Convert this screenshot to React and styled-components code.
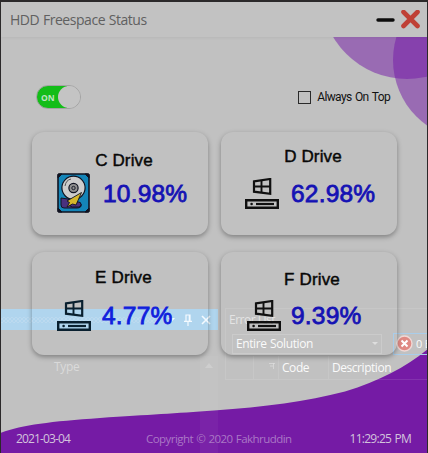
import React from "react";
import styled, { createGlobalStyle } from "styled-components";

const GlobalStyle = createGlobalStyle`
  * { box-sizing: border-box; }
  body { margin: 0; background: #2b292a; overflow: hidden; }
`;

const ui = `"Open Sans", "Noto Sans", sans-serif`;

const Window = styled.main`
  position: relative;
  display: flex;
  flex-direction: column;
  width: 428px;
  height: 453px;
  border: solid #2b292a;
  border-width: 2px 1px 0 1px;
  background: #c1c1c1;
  overflow: hidden;
  font-family: ${ui};
`;

const TitleBar = styled.header`
  position: relative;
  display: flex;
  align-items: center;
  height: 35px;
  padding: 0 7px 0 9px;
  background: #c2c2c2;
  box-shadow: 0 1px 3px rgba(0, 0, 0, 0.06);
`;

const Title = styled.h1`
  flex: 1;
  margin: 0;
  padding-top: 1px;
  font-size: 14px;
  font-weight: 400;
  line-height: 20px;
  letter-spacing: -0.46px;
  word-spacing: 0.5px;
  color: #606060;
`;

const WindowButton = styled.button`
  display: flex;
  padding: 0;
  border: 0;
  background: none;
  margin-left: ${(p) => p.$gap || 0}px;
`;

const Art = styled.svg`
  position: absolute;
  left: -1px;
  top: -2px;
`;

const Controls = styled.div`
  position: relative;
  display: flex;
  align-items: center;
  justify-content: space-between;
  height: 95px;
  padding: 25px 37px 0 35px;
`;

const Toggle = styled.div`
  display: flex;
  align-items: center;
  justify-content: space-between;
  width: 45px;
  height: 24px;
  padding-left: 4px;
  border: 1.5px solid #a3a3a3;
  border-radius: 12px;
  background: linear-gradient(90deg, #13bd18 30px, #c1c1c1 30px);
`;

const ToggleText = styled.span`
  font: 700 8.5px ${ui};
  color: #bfe3c0;
`;

const Knob = styled.span`
  width: 22px;
  height: 22px;
  border-radius: 50%;
  background: #c4c4c4;
`;

const CheckLabel = styled.label`
  display: flex;
  align-items: center;
  gap: 6px;
  font: 12px "Roboto", sans-serif;
  letter-spacing: -0.62px;
  word-spacing: 1px;
  color: #111;
`;

const Box = styled.span`
  width: 13px;
  height: 13px;
  border: 1px solid #2a2a2a;
`;

const Drives = styled.section`
  position: relative;
  display: grid;
  grid-template-columns: 176px 176px;
  grid-template-rows: 103px 103px;
  gap: 17px 13px;
  padding-left: 31px;
`;

const Card = styled.article`
  display: flex;
  flex-direction: column;
  align-items: center;
  padding-top: ${(p) => p.$top}px;
  border-radius: 12px;
  box-shadow: 0 2px 5px rgba(0, 0, 0, 0.34);
`;

const DriveName = styled.h2`
  margin: 0;
  padding-left: ${(p) => p.$shift || 0}px;
  font: 400 17px/20px "Liberation Sans", sans-serif;
  letter-spacing: 0.15px;
  color: #080808;
  -webkit-text-stroke: 0.45px #080808;
`;

const DriveInfo = styled.div`
  display: flex;
  align-items: flex-start;
  align-self: stretch;
  padding-left: ${(p) => p.$left}px;
  margin-top: ${(p) => p.$gap}px;
`;

const Percent = styled.span`
  margin: 5px 0 0 ${(p) => p.$left}px;
  font: 400 24.5px/28px "Liberation Sans", sans-serif;
  letter-spacing: 0.2px;
  color: ${(p) => p.$color || "#1512b4"};
  -webkit-text-stroke: 0.8px ${(p) => p.$color || "#1512b4"};
`;

const IconSlot = styled.span`
  display: flex;
  margin-top: ${(p) => p.$top}px;
`;

const Footer = styled.footer`
  position: relative;
  display: grid;
  grid-template-columns: 130px 1fr auto;
  align-items: center;
  height: 30px;
  margin-top: auto;
  padding: 0 16px 0 15px;
  color: #d3c3dc;
`;

const FooterText = styled.span`
  font-size: 12px;
  letter-spacing: ${(p) => p.$track}px;
  word-spacing: 0.8px;
`;

const Copyright = styled(FooterText)`
  padding-top: 1px;
  font-size: 11.5px;
  color: #aa78c5;
`;

/* Translucent editor panels that show through the window */
const GhostStrip = styled.div`
  position: absolute;
  left: -1px;
  top: 307px;
  display: flex;
  align-items: center;
  justify-content: flex-end;
  gap: 9px;
  width: 218px;
  height: 21px;
  padding-right: 7px;
  background: #b0d5ee;
`;

const Dots = styled.span`
  flex: 1;
  height: 6px;
  background-image: radial-gradient(circle, #bcdaef 0.7px, transparent 1px),
    radial-gradient(circle, #bcdaef 0.7px, transparent 1px);
  background-size: 4px 4px;
  background-position: 0 0, 2px 2px;
`;

const GhostType = styled.div`
  position: absolute;
  left: -1px;
  top: 354px;
  display: flex;
  justify-content: space-between;
  width: 218px;
  height: 99px;
  padding-left: 54px;
  font-size: 12px;
  line-height: 22px;
  letter-spacing: -0.3px;
  color: #dadada;
`;

const GhostScroll = styled.div`
  display: flex;
  justify-content: center;
  width: 18px;
  padding-top: 7px;
  background: rgba(255, 255, 255, 0.04);
`;

const GhostErrors = styled.div`
  position: absolute;
  left: 224px;
  top: 306px;
  width: 203px;
  border: solid rgba(255, 255, 255, 0.1);
  border-width: 1px 0 0 1px;
  color: #fafafa;
  font-size: 12px;
`;

const GhostHeading = styled.div`
  height: 23px;
  padding-left: 3px;
  line-height: 22px;
  letter-spacing: -0.5px;
  color: #e4e4e4;
`;

const GhostTools = styled.div`
  display: flex;
  align-items: center;
  gap: 11px;
  height: 24px;
  padding-left: 6px;
`;

const GhostCombo = styled.div`
  display: flex;
  flex: none;
  align-items: center;
  justify-content: space-between;
  width: 150px;
  height: 20px;
  padding: 0 3px 1px;
  border: 1px solid #cbcbcb;
  letter-spacing: -0.4px;
  word-spacing: 0.8px;
`;

const GhostButton = styled.div`
  display: flex;
  align-items: center;
  gap: 3px;
  flex: 1;
  height: 22px;
  padding: 0 0 1px 2px;
  border: 1px solid #a9cdea;
  border-right: 0;
  white-space: nowrap;
  font-size: 11px;
  letter-spacing: -0.8px;
  word-spacing: 1.2px;

  svg { flex: none; }
`;

const GhostColumns = styled.div`
  display: grid;
  grid-template-columns: 28px 25px 50px 1fr;
  height: 24px;
  border-bottom: 1px solid rgba(255, 255, 255, 0.1);
`;

const GhostColumn = styled.div`
  padding: 0 0 0 3px;
  line-height: 23px;
  border-right: 1px solid rgba(255, 255, 255, 0.1);
  letter-spacing: -0.45px;

  &:last-child { border-right: 0; }
`;

function WindowsDriveIcon({ color = "#101010" }) {
  return (
    <svg width="34" height="31" viewBox="0 0 34 31">
      <path d="M9 3.4 25.2 1v14.8L9 13.7Z" fill="none" stroke={color} strokeWidth="2.2" />
      <path d="M16.5 2.5v12M9 8.5h16" stroke={color} strokeWidth="1.9" />
      <path d="M1.2 22.2h31.6v7.6H1.2Z" fill="none" stroke={color} strokeWidth="2.4" />
      <path d="M11 26h18" stroke={color} strokeWidth="2.2" />
      <circle cx="6.6" cy="26" r="1.3" fill={color} />
    </svg>
  );
}

function DiskIcon() {
  return (
    <svg width="33" height="40" viewBox="0 0 33 40">
      <rect x="1" y="1" width="31" height="38" rx="2" fill="#1485b8" stroke="#101321" strokeWidth="1.6" />
      <path d="M1 1h4L1 5ZM32 1h-4l4 4ZM1 39h4l-4-4ZM32 39h-4l4-4Z" fill="#101321" stroke="#101321" />
      <path d="M4 25v7q0 3 3 3h13q5 0 4-4h-9l-4-5Z" fill="#49317e" stroke="#101321" />
      <rect x="13" y="29" width="11" height="5" rx="2.4" fill="#49317e" stroke="#101321" />
      <circle cx="16.5" cy="14.8" r="11.6" fill="#cdcdcd" stroke="#101321" strokeWidth="1.2" />
      <path d="M8 13q1-6 6-7" fill="none" stroke="#555" strokeWidth="1" />
      <circle cx="16.5" cy="15" r="4.6" fill="#909090" stroke="#101321" strokeWidth="1.2" />
      <circle cx="16.5" cy="15" r="1.7" fill="#909090" stroke="#101321" strokeWidth="0.9" />
      <path d="M24.5 19.500 19 32l-3.500-1L10 34l2.500-4.500L10 28Z" fill="#d5b72b" stroke="#101321" strokeWidth="0.9" />
    </svg>
  );
}

const drives = [
  { name: "C Drive", value: "10.98%", top: 19, shift: 8, gap: 4, left: 25, iconTop: -2, valueLeft: 13, disk: true },
  { name: "D Drive", value: "62.98%", top: 15, shift: 8, gap: 8, left: 24, iconTop: 3, valueLeft: 12 },
  { name: "E Drive", value: "4.77%", top: 16, shift: 7, gap: 9, left: 25, iconTop: 3, valueLeft: 11, color: "#0f20dd", iconColor: "#09202f" },
  { name: "F Drive", value: "9.39%", top: 18, shift: 6, gap: 7, left: 26, iconTop: 3, valueLeft: 10 },
];

export default function App() {
  return (
    <Window>
      <GlobalStyle />
      <Art width="428" height="453" viewBox="0 0 428 453">
        <g fill="#741aa6" fillOpacity="0.51">
          <circle cx="407" cy="-7" r="86" />
          <circle cx="473" cy="60" r="80" />
        </g>
        <path
          d="M0 433C22 425 50 421.5 100 418C150 414.500 175 413.500 214 410.500C265 407 306 401.500 345 391.500C380 381 406 367 428 349V453H0Z"
          fill="#751ba5"
        />
      </Art>

      <GhostStrip>
        <Dots />
        <svg width="7" height="4"><path d="M0 0h7L3.500 4Z" fill="#f4faff" /></svg>
        <svg width="8" height="12" viewBox="0 0 8 12" fill="none" stroke="#f4faff" strokeWidth="1.2">
          <path d="M2 7V1h4v6M0 7.300h8M4 7.500V12M5.300 1v6" />
        </svg>
        <svg width="10" height="10" viewBox="0 0 10 10" stroke="#f4faff" strokeWidth="1.6">
          <path d="m1 1 8 8M9 1 1 9" />
        </svg>
      </GhostStrip>
      <GhostType>
        Type
        <GhostScroll>
          <svg width="8" height="5"><path d="M0 5 4 0l4 5Z" fill="#cecece" /></svg>
        </GhostScroll>
      </GhostType>
      <GhostErrors>
        <GhostHeading>Error List</GhostHeading>
        <GhostTools>
          <GhostCombo>
            Entire Solution
            <svg width="6" height="3"><path d="M0 0h6L3 3Z" fill="#dedede" /></svg>
          </GhostCombo>
          <GhostButton>
            <svg width="17" height="17" viewBox="0 0 17 17">
              <circle cx="8.500" cy="8.500" r="7.500" fill="#e08a84" stroke="#f0d8d5" strokeWidth="1.400" />
              <path d="m5.500 5.500 6 6m0-6-6 6" stroke="#fff" strokeWidth="2" />
            </svg>
            0 E
          </GhostButton>
        </GhostTools>
        <GhostColumns>
          <GhostColumn />
          <GhostColumn>
            <svg width="20" height="12" viewBox="0 0 20 12" fill="none" stroke="#dcdcdc">
              <path d="M12 3.500h6M16.500 3v6M13 6h3" strokeWidth="0.800" />
            </svg>
          </GhostColumn>
          <GhostColumn>Code</GhostColumn>
          <GhostColumn>Description</GhostColumn>
        </GhostColumns>
      </GhostErrors>

      <TitleBar>
        <Title>HDD Freespace Status</Title>
        <WindowButton aria-label="Minimize">
          <svg width="19" height="20"><path d="M2 10h15" stroke="#0c0c0c" strokeWidth="3.400" strokeLinecap="round" /></svg>
        </WindowButton>
        <WindowButton aria-label="Close" $gap={6}>
          <svg width="19" height="20"><path d="m2.500 2 14 14M16.500 2l-14 14" stroke="#bf4036" strokeWidth="4.600" strokeLinecap="round" /></svg>
        </WindowButton>
      </TitleBar>

      <Controls>
        <Toggle>
          <ToggleText>ON</ToggleText>
          <Knob />
        </Toggle>
        <CheckLabel>
          <Box />
          Always On Top
        </CheckLabel>
      </Controls>

      <Drives>
        {drives.map((d) => (
          <Card key={d.name} $top={d.top}>
            <DriveName $shift={d.shift}>{d.name}</DriveName>
            <DriveInfo $left={d.left} $gap={d.gap}>
              <IconSlot $top={d.iconTop}>
                {d.disk ? <DiskIcon /> : <WindowsDriveIcon color={d.iconColor} />}
              </IconSlot>
              <Percent $left={d.valueLeft} $color={d.color}>{d.value}</Percent>
            </DriveInfo>
          </Card>
        ))}
      </Drives>

      <Footer>
        <FooterText $track={-0.85}>2021-03-04</FooterText>
        <Copyright $track={-0.55}>Copyright © 2020 Fakhruddin</Copyright>
        <FooterText $track={-0.72}>11:29:25 PM</FooterText>
      </Footer>
    </Window>
  );
}
